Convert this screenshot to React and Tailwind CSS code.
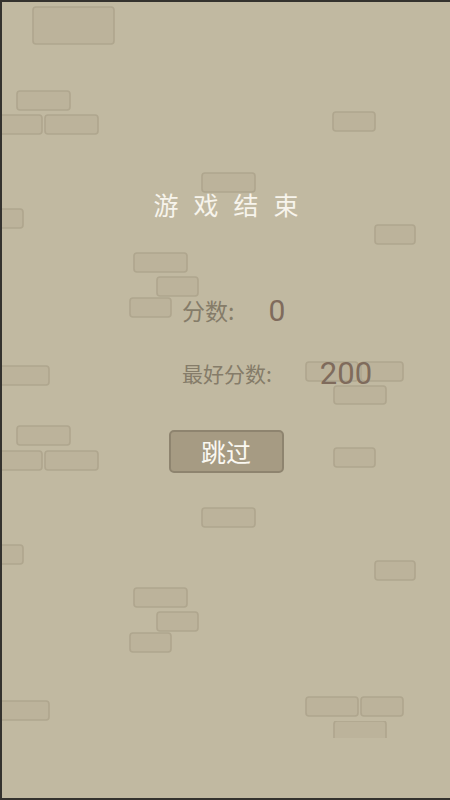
const bricks = [
  [31, 5, 81, 37],
  [15, 89, 53, 19],
  [-4, 113, 44, 19],
  [43, 113, 53, 19],
  [331, 110, 42, 19],
  [200, 171, 53, 19],
  [-4, 207, 25, 19],
  [373, 223, 40, 19],
  [132, 251, 53, 19],
  [155, 275, 41, 19],
  [128, 296, 41, 19],
  [-4, 364, 51, 19],
  [304, 360, 52, 19],
  [359, 360, 42, 19],
  [332, 384, 52, 18],
  [15, 424, 53, 19],
  [-4, 449, 44, 19],
  [43, 449, 53, 19],
  [332, 446, 41, 19],
  [200, 506, 53, 19],
  [-4, 543, 25, 19],
  [373, 559, 40, 19],
  [132, 586, 53, 19],
  [155, 610, 41, 19],
  [128, 631, 41, 19],
  [-4, 699, 51, 19],
  [304, 695, 52, 19],
  [359, 695, 42, 19],
];

function BrickWall() {
  return (
    <svg className="absolute inset-0" width="450" height="800" viewBox="0 0 450 800">
      <defs>
        <clipPath id="cut">
          <rect x="0" y="719" width="450" height="17" />
        </clipPath>
      </defs>
      {bricks.map(([x, y, w, h], i) => (
        <rect
          key={i}
          x={x}
          y={y}
          width={w}
          height={h}
          rx="3"
          fill="#bcb39b"
          stroke="#afa68e"
          strokeWidth="1.6"
        />
      ))}
      <rect
        x="332"
        y="719"
        width="52"
        height="22"
        rx="3"
        fill="#bcb39b"
        stroke="#afa68e"
        strokeWidth="1.6"
        clipPath="url(#cut)"
      />
    </svg>
  );
}

export default function App() {
  return (
    <div className="relative w-[450px] h-[800px] overflow-hidden bg-[#c1b9a1] border-l-2 border-t-2 border-b-2 border-[#34322e]">
      <BrickWall />

      <div className="relative flex flex-col items-center" style={{ fontFamily: '"Noto Sans CJK SC", "Noto Sans", sans-serif' }}>
        <h1 className="mt-[185px] pl-[15px] text-[25px] leading-[34px] tracking-[15px] text-[#f7f4ec] font-normal">
          游戏结束
        </h1>

        <div className="mt-[69px] self-start ml-[180px] flex flex-col gap-[24px]">
          <div className="flex items-center h-[40px]">
            <span className="text-[23px] text-[#857c69]">分数:</span>
            <span className="ml-[34px] text-[30px] text-[#7f6b5c]" style={{ fontFamily: 'Roboto, "Liberation Sans", sans-serif' }}>
              0
            </span>
          </div>
          <div className="flex items-center h-[40px]">
            <span className="text-[21px] text-[#857c69]">最好分数:</span>
            <span className="ml-[48px] text-[31px] text-[#7f6b5c]" style={{ fontFamily: 'Roboto, "Liberation Sans", sans-serif' }}>
              200
            </span>
          </div>
        </div>

        <button className="mt-[36px] w-[115px] h-[43px] rounded-[5px] border-2 border-[#8e846f] bg-[#a69b83] text-[25px] leading-none text-[#faf8f2] flex items-center justify-center">
          跳过
        </button>
      </div>
    </div>
  );
}
